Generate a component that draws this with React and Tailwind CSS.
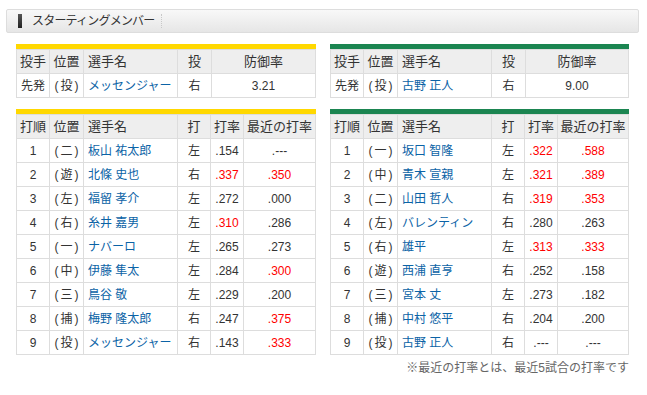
import React from "react";

const FONT = "font-['Liberation_Sans','Noto_Sans_CJK_JP',sans-serif]";

const teams = [
  {
    bar: "bg-[#ffd800]",
    pitcher: { pos: "(投)", name: "メッセンジャー", hand: "右", era: "3.21" },
    lineup: [
      ["1", "(二)", "板山 祐太郎", "左", ".154", false, ".---", false],
      ["2", "(遊)", "北條 史也", "右", ".337", true, ".350", true],
      ["3", "(左)", "福留 孝介", "左", ".272", false, ".000", false],
      ["4", "(右)", "糸井 嘉男", "左", ".310", true, ".286", false],
      ["5", "(一)", "ナバーロ", "左", ".265", false, ".273", false],
      ["6", "(中)", "伊藤 隼太", "左", ".284", false, ".300", true],
      ["7", "(三)", "鳥谷 敬", "左", ".229", false, ".200", false],
      ["8", "(捕)", "梅野 隆太郎", "右", ".247", false, ".375", true],
      ["9", "(投)", "メッセンジャー", "右", ".143", false, ".333", true],
    ],
  },
  {
    bar: "bg-[#1b8551]",
    pitcher: { pos: "(投)", name: "古野 正人", hand: "右", era: "9.00" },
    lineup: [
      ["1", "(一)", "坂口 智隆", "左", ".322", true, ".588", true],
      ["2", "(中)", "青木 宣親", "左", ".321", true, ".389", true],
      ["3", "(二)", "山田 哲人", "右", ".319", true, ".353", true],
      ["4", "(左)", "バレンティン", "右", ".280", false, ".263", false],
      ["5", "(右)", "雄平", "左", ".313", true, ".333", true],
      ["6", "(遊)", "西浦 直亨", "右", ".252", false, ".158", false],
      ["7", "(三)", "宮本 丈", "左", ".273", false, ".182", false],
      ["8", "(捕)", "中村 悠平", "右", ".204", false, ".200", false],
      ["9", "(投)", "古野 正人", "右", ".---", false, ".---", false],
    ],
  },
];

const th = "h-[24px] border border-[#dddddd] bg-[#eeeeee] font-normal text-[#333] p-0 text-[13px]";
const td = "h-[24px] border border-[#dddddd] bg-white text-[#333] p-0 text-center";
const posCell = `${td} tracking-[2px] pl-[2px]`;
const nameCell = "h-[24px] border border-[#dddddd] bg-white text-[#0b63a6] p-0 pl-[4px] text-left whitespace-nowrap";

function PitcherTable({ bar, p }) {
  return (
    <div>
      <div className={`h-[5px] ${bar}`} />
      <table className="w-full table-fixed border-collapse text-[12px]">
        <colgroup>
          <col className="w-[33px]" />
          <col className="w-[34px]" />
          <col className="w-[94px]" />
          <col className="w-[34px]" />
          <col />
        </colgroup>
        <thead>
          <tr>
            <th className={th}>投手</th>
            <th className={th}>位置</th>
            <th className={`${th} text-left pl-[4px]`}>選手名</th>
            <th className={th}>投</th>
            <th className={th}>防御率</th>
          </tr>
        </thead>
        <tbody>
          <tr>
            <td className={td}>先発</td>
            <td className={posCell}>{p.pos}</td>
            <td className={nameCell}>{p.name}</td>
            <td className={td}>{p.hand}</td>
            <td className={td}>{p.era}</td>
          </tr>
        </tbody>
      </table>
    </div>
  );
}

function LineupTable({ bar, rows }) {
  return (
    <div>
      <div className={`h-[5px] ${bar}`} />
      <table className="w-full table-fixed border-collapse text-[12px]">
        <colgroup>
          <col className="w-[33px]" />
          <col className="w-[34px]" />
          <col className="w-[94px]" />
          <col className="w-[33px]" />
          <col className="w-[33px]" />
          <col />
        </colgroup>
        <thead>
          <tr>
            <th className={th}>打順</th>
            <th className={th}>位置</th>
            <th className={`${th} text-left pl-[4px]`}>選手名</th>
            <th className={th}>打</th>
            <th className={th}>打率</th>
            <th className={`${th} whitespace-nowrap`}>最近の打率</th>
          </tr>
        </thead>
        <tbody>
          {rows.map((r) => (
            <tr key={r[0]}>
              <td className={td}>{r[0]}</td>
              <td className={posCell}>{r[1]}</td>
              <td className={nameCell}>{r[2]}</td>
              <td className={td}>{r[3]}</td>
              <td className={`${td} ${r[5] ? "!text-[#ff0000]" : ""}`}>{r[4]}</td>
              <td className={`${td} ${r[7] ? "!text-[#ff0000]" : ""}`}>{r[6]}</td>
            </tr>
          ))}
        </tbody>
      </table>
    </div>
  );
}

export default function App() {
  return (
    <div className={`w-[647px] h-[395px] bg-white ${FONT}`}>
      <div className="pt-[9px] pl-[6px] pr-[8px]">
        <div className="h-[24px] flex items-center border border-[#dddddd] rounded-[2px] bg-gradient-to-b from-[#f8f8f8] via-[#efefef] to-[#e6e6e6]">
          <div className="ml-[11px] w-[4px] h-[14px] bg-gradient-to-b from-[#555] to-[#222]" />
          <span className="ml-[10px] text-[12px] tracking-[-0.8px] text-[#333] leading-none">
            スターティングメンバー
          </span>
          <div className="ml-[7px] h-[14px] border-l border-dotted border-[#c8c8c8]" />
        </div>
      </div>

      <div className="flex gap-[14px] pl-[16px] mt-[11px]">
        {teams.map((t, i) => (
          <div key={i} className={i === 0 ? "w-[300px]" : "w-[299px]"}>
            <PitcherTable bar={t.bar} p={t.pitcher} />
            <div className="h-[11px]" />
            <LineupTable bar={t.bar} rows={t.lineup} />
          </div>
        ))}
      </div>

      <p className="mt-[5px] w-[629px] text-right text-[12px] text-[#666] leading-[16px]">
        ※最近の打率とは、最近5試合の打率です
      </p>
    </div>
  );
}
